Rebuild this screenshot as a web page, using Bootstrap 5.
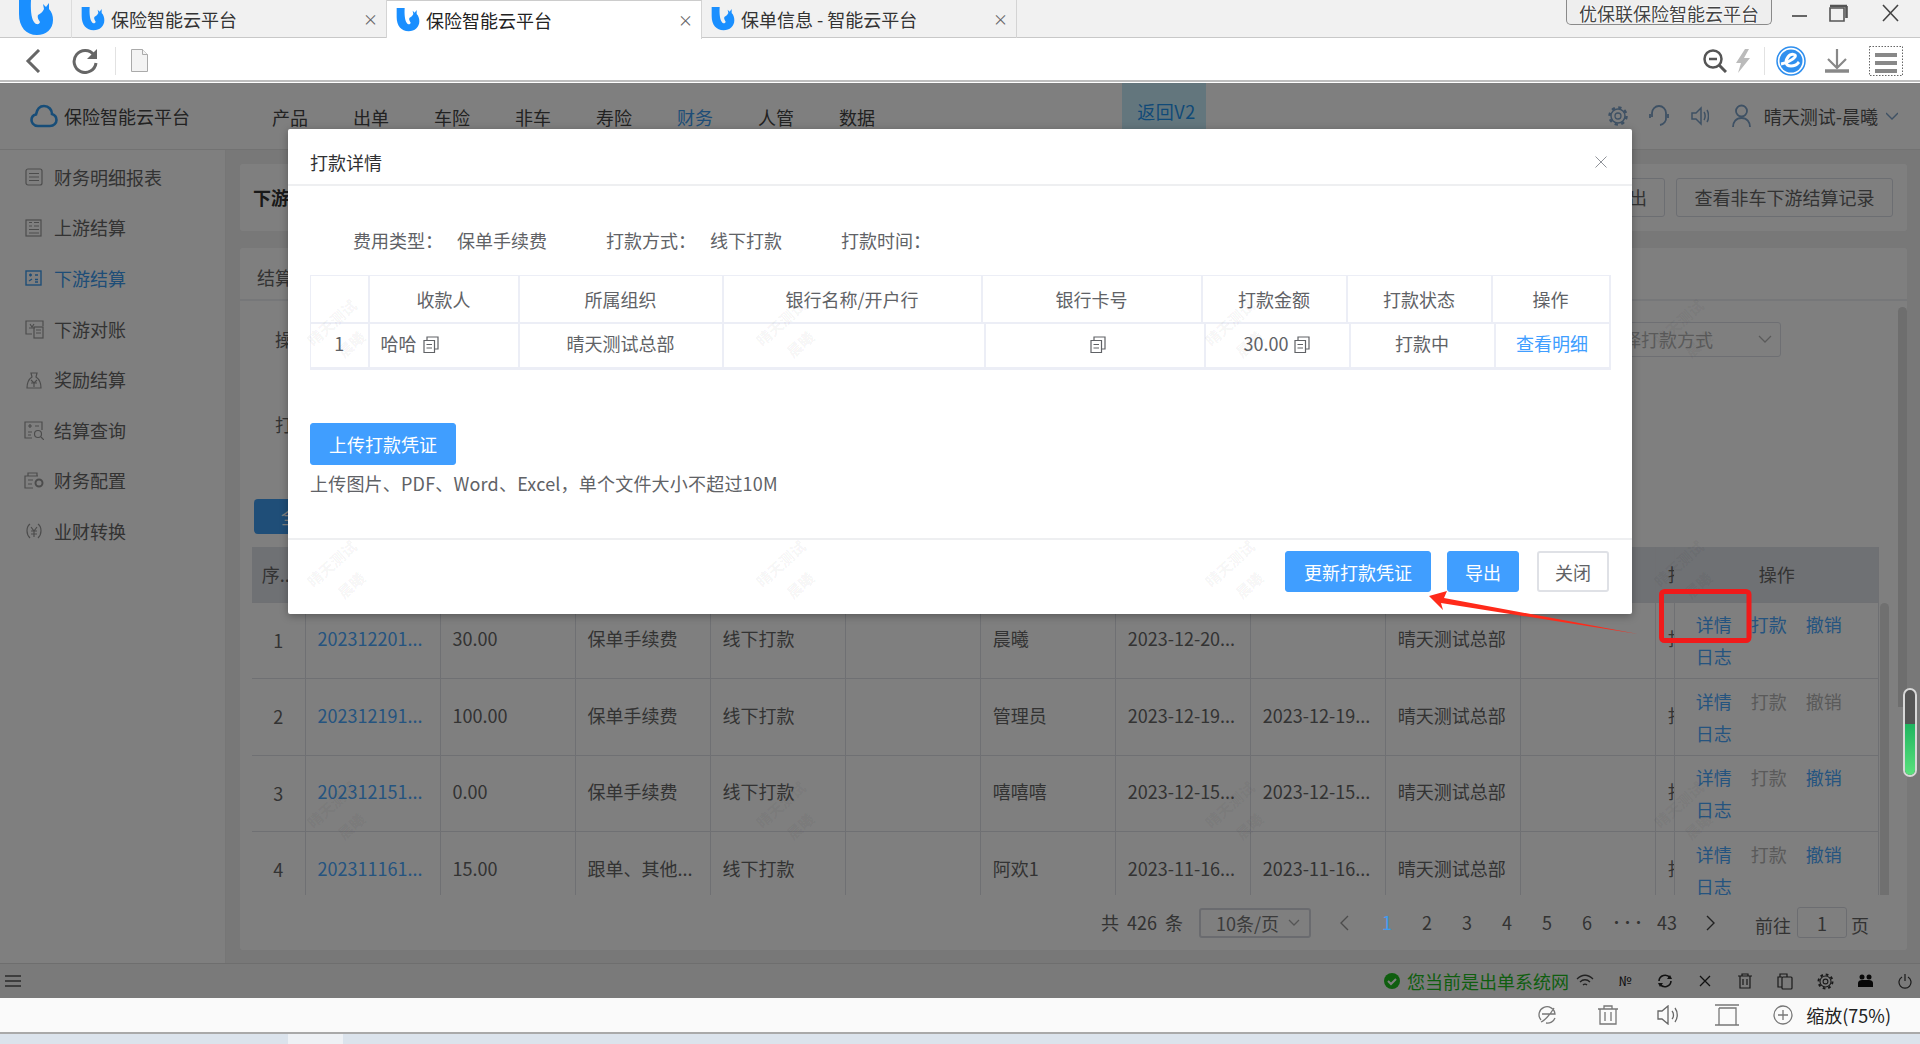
<!DOCTYPE html>
<html lang="zh-CN">
<head>
  <meta charset="UTF-8">
  <title>保险智能云平台</title>
  <link rel="stylesheet" href="https://cdn.jsdelivr.net/npm/bootstrap@5.3.0/dist/css/bootstrap.min.css">
  <style>
    html, body { margin: 0; height: 1044px; overflow: hidden; }
    body { position: relative; width: 1920px; font: 18px/1.5 "Noto Sans CJK SC", "Liberation Sans", sans-serif; color: #666; background: #dbe3ec; }
    svg { flex: none; display: block; }

    /* browser chrome */
    .tabstrip { height: 38px; background: #f1f1f1; border-bottom: 1px solid #c8c8c8; }
    .main-logo { width: 72px; height: 38px; padding-left: 19px; border-right: 1px solid #dcdcdc; }
    .wintab { width: 315px; height: 38px; padding-left: 9px; gap: 6px; color: #333; line-height: 38px; border-right: 1px solid #d4d4d4; }
    .wintab.on { background: #fff; height: 39px; border-top: 1px solid #ccc; color: #222; }
    .wintab .shut { margin-left: auto; margin-right: 8px; color: #666; font-size: 15px; }
    .brand-tag { width: 206px; height: 25px; margin-left: auto; margin-right: 20px; border: 1px solid #8a8a8a; border-top: 0; border-radius: 0 0 5px 5px; background: #eee; color: #444; font-size: 18px; line-height: 27px; text-align: center; text-shadow: 0 0 2px #fff, 0 0 2px #fff, 0 0 2px #fff; }
    .win-btns { width: 128px; padding-right: 21px; justify-content: flex-end; }
    .win-min { margin-right: 21px; }
    .win-max { margin-right: 34px; }
    .toolbar { height: 45px; background: linear-gradient(#fff 42px, #bdbdbd 42px, #bdbdbd 44px, #fff 44px); }
    .bar-sep { height: 28px; border-left: 1px solid #e2e2e2; }
    .bar-back { margin-left: 24px; }
    .bar-reload { margin-left: 28px; }
    .bar-sep.left-sep { margin: 0 15px 0 17px; }
    .bar-sep.right-sep { margin: 0 11px 0 13px; }
    .bar-down { margin-left: 18px; }
    .bar-menu { margin: 0 17px 0 19px; }

    /* app under the dialog mask */
    .app-shell { position: relative; height: 915px; background: #f0f0f0; }
    .app-upper { height: 880px; }
    .app-head { height: 67px; background: #fff; border-bottom: 1px solid #e4e4e4; color: #444; }
    .app-brand { width: 272px; padding-left: 30px; gap: 6px; }
    .menu-item { margin-right: 45px; line-height: 68px; }
    .menu-item.on, .side-item.on { color: #3c9bee; }
    .back-v2 { width: 84px; margin-left: 202px; padding-left: 5px; background: #c7edfa; color: #1f94f0; line-height: 57px; text-align: center; letter-spacing: .5px; }
    .head-right { margin-left: auto; padding-right: 22px; color: #555; }
    .hd-b { margin-left: 21px; } .hd-c { margin-left: 22px; } .hd-d { margin-left: 23px; }
    .hd-name { margin: 0 8px 0 13px; }
    .app-lower { height: 813px; }
    .app-side { width: 226px; background: #fff; border-right: 1px solid #ececec; padding-top: 2px; }
    .side-item { height: 50.6px; padding-left: 24px; gap: 10px; color: #666; }
    .side-ico { width: 20px; }
    .app-main { width: 0; padding: 14px 13px 13px 14px; }
    .pane { background: #fff; border: 0; border-radius: 3px; }
    .title-pane { height: 67px; padding: 0 14px 0 13px; margin-bottom: 17px; }
    .title-txt { color: #333; font-weight: 700; }
    .plain-btn { height: 39px; line-height: 37px; padding: 0 17px; border: 1px solid #d8dce4; border-radius: 3px; color: #666; background: #fff; }
    .plain-btn.wide { width: 217px; padding: 0; text-align: center; }
    .plain-btn.first { margin-right: 3px; }
    .tab-line { height: 53px; padding-left: 17px; line-height: 58px; border-bottom: 2px solid #eceef2; }
    .filter-line { height: 35px; padding-left: 35px; line-height: 35px; }
    .filter-line.one { margin-top: 21px; }
    .filter-line.two { margin-top: 50px; }
    .fake-select { height: 35px; width: 210px; padding: 0 8px 0 15px; margin-left: auto; margin-right: 126px; border: 1px solid #dcdfe6; border-radius: 3px; color: #b5b5b5; }
    .all-btn { width: 90px; height: 35px; margin: 57px 0 13px 14px; background: #3f9cf0; color: #fff; border: 0; border-radius: 4px; padding: 0; font-size: 18px; }

    .data-wrap { margin-left: 12px; width: 1637px; height: 348px; overflow: hidden; position: relative; }
    .table.data-table { width: 1627px; table-layout: fixed; margin: 0; border-color: #dfe1e6; --bs-table-bg: #fff; --bs-table-color: #666; }
    .table.data-table td, .table.data-table th { padding: 0 0 3px 12px; border-width: 0 1px 1px 0; font-weight: 400; vertical-align: middle; white-space: nowrap; overflow: hidden; }
    .table.data-table th { height: 55px; padding-bottom: 0; background: #dfe2e8; }
    .table.data-table tbody tr { height: 76.5px; }
    .table.data-table .num-cell { padding: 0; text-align: center; }
    .col-idx { width: 53px; } .col-std { width: 135px; } .col-cut { width: 19px; } .col-act { width: 204px; }
    .bill-link, .act-on { color: #4aa8ff; }
    .act-off { color: #b4b4b4; }
    .table.data-table .act-cell { line-height: 32px; padding: 0 0 0 21px; }
    .act-cell span { margin-right: 19px; }
    .act-cell .head-act { margin-left: 63px; }
    .thin-bar { position: absolute; top: 56px; right: 0; width: 9px; height: 292px; background: #e0e0e0; border-radius: 5px 5px 0 0; }
    .outer-bar { position: absolute; right: 0; top: 59px; width: 9px; height: 400px; background: #dcdcdc; border-radius: 5px 5px 0 0; }

    .pager-line { height: 55px; padding-right: 38px; justify-content: flex-end; color: #666; }
    .total-txt { word-spacing: 4px; }
    .page-select { width: 112px; height: 30px; margin: 0 10px 0 16px; padding: 0 9px 0 15px; border: 2px solid #d4d7de; border-radius: 3px; color: #777; line-height: 26px; }
    .pagination { margin: 0 22px 0 0; }
    .pagination .page-item .page-link { width: 40px; margin: 0; padding: 0; background: transparent; border: 0; color: #666; text-align: center; font-size: 18px; line-height: 27px; white-space: nowrap; }
    .pagination .page-item .page-link.arrow { width: 46px; height: 27px; display: flex; align-items: center; justify-content: center; }
    .pagination .page-item.active .page-link { color: #3f9cf0; background: transparent; }
    .pagination .page-item .page-link.dots { font-size: 12px; font-weight: 700; letter-spacing: -1px; }
    .goto-box { width: 50px; height: 31px; margin: 0 4px 0 6px; border: 1px solid #d8dbe2; border-radius: 3px; text-align: center; line-height: 31px; }
    .goto-text { position: relative; top: 3px; }

    /* status strips */
    .status-strip { height: 35px; border-top: 1px solid #dcdcdc; background: #f4f4f4; color: #222; }
    .ok-text { color: #1ebd1e; margin: 0 7px; }
    .wifi-ico { margin-right: 11px; }
    .slot { width: 40px; justify-content: center; }
    .slot.small-txt { font-size: 13px; }
    .slot.tail { width: 30px; margin-left: 5px; }
    .app-bottom { height: 36px; background: #fafafa; border-bottom: 2px solid #a9a9a9; color: #222; padding-right: 29px; justify-content: flex-end; }
    .ab-b { margin-left: 40px; } .ab-c { margin-left: 39px; } .ab-d { margin-left: 36px; } .ab-e { margin-left: 34px; }
    .zoom-txt { margin-left: 13px; }
    .desktop-strip { height: 10px; padding-left: 288px; }
    .desktop-strip i { display: block; width: 55px; height: 10px; background: #eef1f5; }

    /* dialog */
    .dlg-mask { position: absolute; inset: 0; background: rgba(0, 0, 0, .5); padding-top: 46px; }
    .dlg-box.modal-content { width: 1344px; height: 485px; background: #fff; border: 0; border-radius: 2px; box-shadow: 0 2px 8px rgba(0,0,0,.3); color: #606266; }
    .dlg-box .modal-header { height: 57px; padding: 11px 22px 0; border-bottom: 2px solid #eeeff1; color: #303133; }
    .dlg-box .modal-title { font-size: 18px; line-height: 1.5; }
    .dlg-box .modal-body { padding: 0 23px 0 22px; }
    .dlg-x { margin-right: 3px; }
    .info-line { height: 34px; margin: 37px 0 18px 43px; line-height: 34px; }
    .info-line b { font-weight: 400; margin-right: 14px; width: 90px; }
    .info-line span { margin-right: 59px; }
    .table.pay-table { table-layout: fixed; width: 1299px; margin: 0; border-color: #eceef6; --bs-table-bg: transparent; --bs-table-color: #606266; }
    .table.pay-table th, .table.pay-table td { border-width: 1px 2px 1px 1px; padding: 0; font-weight: 400; text-align: center; vertical-align: middle; }
    .table.pay-table th { height: 47px; }
    .table.pay-table td { height: 45px; padding-bottom: 4px; border-bottom-width: 3px; }
    .table.pay-table .left-cell { text-align: left; padding-left: 11px; }
    .copy-ico { display: inline-block; vertical-align: -2px; margin-left: 6px; }
    .w58 { width: 58px; } .w150 { width: 150px; } .w204 { width: 204px; } .w259 { width: 259px; } .w262 { width: 262px; } .w220 { width: 220px; } .w145 { width: 145px; } .w118 { width: 118px; } .w115 { width: 115px; }
    .see-link { color: #409eff; }
    .blue-btn { height: 41px; padding: 0; background: #409eff; border: 1px solid #409eff; border-radius: 3px; color: #fff; font-size: 18px; line-height: 1; }
    .blue-btn:hover { background: #409eff; color: #fff; }
    .up-btn { width: 146px; height: 42px; margin-top: 53px; display: block; }
    .up-tip { margin-top: 5px; letter-spacing: .2px; }
    .dlg-box .modal-footer { height: 76px; padding: 11px 23px 0 0; border-top: 2px solid #eeeff1; align-items: flex-start; justify-content: flex-end; flex-wrap: nowrap; }
    .dlg-box .modal-footer > * { margin: 0; }
    .w146 { width: 146px; } .w72 { width: 72px; }
    .dlg-box .modal-footer > .gap-a { margin-left: 16px; }
    .dlg-box .modal-footer > .gap-b { margin-left: 18px; }
    .line-btn { height: 41px; width: 72px; padding: 0; background: #fff; border: 2px solid #dfe1e6; border-radius: 3px; color: #606266; font-size: 18px; line-height: 1; }

    /* watermark + annotation, both sit over everything */
    .mark-layer { position: absolute; left: 117px; top: 213px; display: grid; grid-template-columns: repeat(4, 449px); grid-auto-rows: 241px; pointer-events: none; }
    .mark-cell { display: flex; align-items: center; justify-content: center; text-align: center; color: rgba(0,0,0,.05); font: 700 15px/1.9 "Noto Sans CJK SC", sans-serif; transform: rotate(-42deg); }
    .note-layer { position: absolute; left: 0; top: 0; pointer-events: none; }
    .level-gauge { position: absolute; left: 1903px; top: 688px; width: 14px; height: 89px; border: 2px solid #d8d8d8; border-radius: 7px; background: #555; overflow: hidden; }
    .level-gauge i { display: block; margin-top: 34px; height: 55px; background: linear-gradient(#1fb45f, #5fe57f); }
  </style>
</head>
<body>
  <svg width="0" height="0" class="position-absolute">
    <symbol id="fish" viewBox="0 0 34 36"><path fill="#1a8fff" d="M0 0H12C11.500 8 12 18 15 22C17 25 20 25 21 22C20 20 18 18 19 15C21 14 24 12 25 9L24 4L27 7L30 3L30 9C33 12 34 16 34 20C34 29 27 35 18 35C7 35 0 27 0 14Z"/></symbol>
    <symbol id="copy" viewBox="0 0 16 17"><path fill="none" stroke="currentColor" stroke-width="1.200" d="M1 4.500h10.500v12H1zM4 4.500V1h11v12h-3.500M3.500 8.500h5.500M3.500 12h5.500"/></symbol>
  </svg>

  <!-- window tabs -->
  <div class="tabstrip d-flex align-items-start">
    <div class="main-logo"><svg width="34" height="36"><use href="#fish"/></svg></div>
    <div class="wintab d-flex align-items-center"><svg width="24" height="24"><use href="#fish"/></svg>保险智能云平台<span class="shut">×</span></div>
    <div class="wintab on d-flex align-items-center"><svg width="24" height="24"><use href="#fish"/></svg>保险智能云平台<span class="shut">×</span></div>
    <div class="wintab d-flex align-items-center"><svg width="24" height="24"><use href="#fish"/></svg>保单信息 - 智能云平台<span class="shut">×</span></div>
    <div class="brand-tag">优保联保险智能云平台</div>
    <div class="win-btns d-flex align-items-center pt-1">
      <svg class="win-min" width="16" height="18" viewBox="0 0 16 18"><path stroke="#666" stroke-width="2" d="M0 12h15"/></svg>
      <svg class="win-max" width="19" height="18" viewBox="0 0 19 18" fill="none" stroke="#555" stroke-width="1.600"><path d="M1 4h14v13H1z"/><path stroke-width="2.600" d="M1 2h17M17.500 2v12"/></svg>
      <svg width="17" height="18" viewBox="0 0 17 18" fill="none" stroke="#444" stroke-width="1.600"><path d="M1 1l15 16M16 1L1 17"/></svg>
    </div>
  </div>

  <!-- address bar -->
  <div class="toolbar d-flex align-items-center">
    <svg class="bar-back" width="20" height="24" viewBox="0 0 20 24" fill="none" stroke="#666" stroke-width="3"><path d="M15 1L4 12l11 11"/></svg>
    <svg class="bar-reload" width="26" height="26" viewBox="0 0 26 26" fill="none" stroke="#666" stroke-width="3"><path d="M22 7A11 11 0 1 0 24 15"/><path fill="#666" stroke="none" d="M25 1v10H15z"/></svg>
    <div class="bar-sep left-sep"></div>
    <svg width="17" height="23" viewBox="0 0 17 23" fill="#f3f3f3" stroke="#aaa"><path d="M.5.500h11l5 5v17H.500z"/><path d="M11.500.500v5h5"/></svg>
    <div class="ms-auto d-flex align-items-center">
      <svg width="24" height="24" viewBox="0 0 24 24" fill="none" stroke="#555" stroke-width="2.500"><circle cx="10" cy="10" r="8.500"/><path d="M6 10h8"/><path stroke-width="3" d="M16 16l7 7"/></svg>
      <svg class="ms-2" width="16" height="24" viewBox="0 0 16 24"><path fill="#bbb" d="M10 0L1 14h5L3 24l12-15H9l5-9z"/></svg>
      <div class="bar-sep right-sep"></div>
      <svg width="30" height="30" viewBox="0 0 30 30"><circle cx="15" cy="15" r="14" fill="#fff" stroke="#2f8fee" stroke-width="1.500"/><circle cx="15" cy="15" r="11.500" fill="#2f8fee"/><path fill="none" stroke="#fff" stroke-width="3" d="M5 18c5-1 12-4 14-7s-4-4-7 0-3 9 3 9 7-3 8-4"/></svg>
      <svg class="bar-down" width="26" height="24" viewBox="0 0 26 24" fill="none" stroke="#888" stroke-width="2.200"><path d="M13 0v18M4 10l9 9 9-9"/><path stroke-width="3.500" d="M1 22h24"/></svg>
      <svg class="bar-menu" width="34" height="30" viewBox="0 0 34 30"><rect x=".5" y=".5" width="33" height="29" fill="none" stroke="#666" stroke-dasharray="1.500 1.500"/><path stroke="#888" stroke-width="4" d="M6 9h22M6 17h22M6 25h22"/></svg>
    </div>
  </div>

  <div class="app-shell d-flex flex-column">
    <div class="app-upper">
      <div class="app-head d-flex">
        <div class="app-brand d-flex align-items-center">
          <svg width="28" height="24" viewBox="0 0 28 24" fill="none" stroke="#2f9af0" stroke-width="2.600"><path d="M8 22C3 22 1.500 18 1.500 16c0-3 2-5 4.500-5.500C7 5 10 2 14 2c5 0 8 4 8 8 3 1 4.500 3.500 4.500 6 0 3-2.500 6-6.500 6z"/></svg>
          <span>保险智能云平台</span>
        </div>
        <div class="menu-item">产品</div><div class="menu-item">出单</div><div class="menu-item">车险</div><div class="menu-item">非车</div>
        <div class="menu-item">寿险</div><div class="menu-item on">财务</div><div class="menu-item">人管</div><div class="menu-item">数据</div>
        <div class="back-v2">返回V2</div>
        <div class="head-right d-flex align-items-center">
          <svg width="20" height="22" viewBox="0 0 20 22" fill="none" stroke="#7da2c8"><circle cx="10" cy="11" r="7" stroke-width="1.500"/><circle cx="10" cy="11" r="8.500" stroke-width="2.500" stroke-dasharray="3.300 3.370"/><circle cx="10" cy="11" r="3" stroke-width="1.300"/></svg>
          <svg class="hd-b" width="20" height="24" viewBox="0 0 20 24" fill="none" stroke="#7da2c8" stroke-width="1.800"><path d="M3 13V9a7 7 0 0 1 14 0v4a7 7 0 0 1-6 8"/><path d="M1 10v4M19 10v4"/></svg>
          <svg class="hd-c" width="18" height="22" viewBox="0 0 18 22" fill="none" stroke="#7da2c8" stroke-width="1.500"><path d="M1 8h4l5-5v16l-5-5H1zM13 7c1.500 2 1.500 6 0 8M16 5c2 3 2 9 0 12"/></svg>
          <svg class="hd-d" width="19" height="24" viewBox="0 0 19 24" fill="none" stroke="#7da2c8" stroke-width="1.800"><circle cx="9.500" cy="7" r="5.500"/><path d="M1 23c0-5 3-9 8.500-9s8.500 4 8.500 9"/></svg>
          <span class="hd-name">晴天测试-晨曦</span>
          <svg width="12" height="8" viewBox="0 0 12 8" fill="none" stroke="#7da2c8" stroke-width="1.400"><path d="M0 1l6 6 6-6"/></svg>
        </div>
      </div>

      <div class="app-lower d-flex">
        <div class="app-side">
          <div class="side-item d-flex align-items-center"><svg class="side-ico" height="18" viewBox="0 0 20 18" fill="none" stroke="#999" stroke-width="1.200"><rect x="2" y="1" width="16" height="16" rx="2"/><path d="M5 5.500h10M5 9h10M5 12.500h10"/></svg>财务明细报表</div>
          <div class="side-item d-flex align-items-center"><svg class="side-ico" height="18" viewBox="0 0 20 18" fill="none" stroke="#999" stroke-width="1.200"><rect x="2" y="1" width="15" height="16"/><path d="M5 3.500l3 0M5 7l3 0M10 3.500h5M10 7h5M5 10.500h10M5 14h10"/></svg>上游结算</div>
          <div class="side-item on d-flex align-items-center"><svg class="side-ico" height="16" viewBox="0 0 20 16" fill="none" stroke="#3c9bee" stroke-width="1.400"><rect x="2" y="1" width="15" height="14"/><path d="M5 5h3M6.500 3.500v3M11 5h3M5 11l3-2M11 9.500h3M11 12h3"/></svg>下游结算</div>
          <div class="side-item d-flex align-items-center"><svg class="side-ico" height="19" viewBox="0 0 20 19" fill="none" stroke="#999" stroke-width="1.200"><path d="M8 14H2V1h17v5"/><rect x="10" y="7" width="9" height="11"/><path d="M12 10h5M12 13h5M6 4l2 3 2-3M5 8h6"/></svg>下游对账</div>
          <div class="side-item d-flex align-items-center"><svg class="side-ico" height="18" viewBox="0 0 20 18" fill="none" stroke="#999" stroke-width="1.200"><path d="M7 2h6l-1 4c3 2 5 6 5 11H3c0-5 2-9 5-11zM7 9l3 3 3-3M7 12h6M10 12v4"/></svg>奖励结算</div>
          <div class="side-item d-flex align-items-center"><svg class="side-ico" height="19" viewBox="0 0 20 19" fill="none" stroke="#999" stroke-width="1.200"><path d="M8 17H1V1h17v8"/><path d="M4 5h4M6 3v4M11 5h4M4 11h4M4 14h3"/><circle cx="14" cy="13" r="3.500"/><path d="M17 16l3 3"/></svg>结算查询</div>
          <div class="side-item d-flex align-items-center"><svg class="side-ico" height="18" viewBox="0 0 20 18" fill="none" stroke="#999" stroke-width="1.200"><path d="M9 16H1V4h13M4 4V1h9v3M4 8h5M4 12h4"/><circle cx="15" cy="11" r="3.500" stroke-width="2"/></svg>财务配置</div>
          <div class="side-item d-flex align-items-center"><svg class="side-ico" height="18" viewBox="0 0 20 18" fill="none" stroke="#999" stroke-width="1.200"><path d="M6 2C2 5 2 12 6 16M14 2c4 3 4 10 0 14M7 5l3 4 3-4M7 9h6M7 12h6M10 9v6"/></svg>业财转换</div>
        </div>

        <div class="app-main flex-grow-1 d-flex flex-column position-relative">
          <div class="title-pane pane d-flex align-items-center justify-content-between">
            <span class="title-txt">下游结算</span>
            <div class="d-flex gap-2">
              <div class="plain-btn first">导出</div>
              <div class="plain-btn wide">查看非车下游结算记录</div>
            </div>
          </div>

          <div class="card pane flex-grow-1 position-relative">
            <div class="tab-line">结算</div>
            <div class="filter-line one d-flex align-items-center">操作
              <div class="fake-select d-flex align-items-center justify-content-between">请选择打款方式
                <svg width="14" height="9" viewBox="0 0 14 9" fill="none" stroke="#b5b5b5" stroke-width="1.300"><path d="M1 1l6 6 6-6"/></svg>
              </div>
            </div>
            <div class="filter-line two">打款</div>
            <button class="all-btn btn">全部</button>

            <div class="data-wrap">
              <table class="table data-table">
                <thead><tr>
                  <th class="col-idx num-cell">序...</th><th class="col-std"></th><th class="col-std"></th><th class="col-std"></th><th class="col-std"></th><th class="col-std"></th><th class="col-std"></th><th class="col-std"></th><th class="col-std"></th><th class="col-std"></th><th class="col-std"></th><th class="col-cut">打款状态</th><th class="col-act act-cell"><span class="head-act">操作</span></th>
                </tr></thead>
                <tbody>
                  <tr><td class="num-cell">1</td><td><span class="bill-link">202312201...</span></td><td>30.00</td><td>保单手续费</td><td>线下打款</td><td></td><td>晨曦</td><td>2023-12-20...</td><td></td><td>晴天测试总部</td><td></td><td>打款中</td><td class="act-cell"><span class="act-on">详情</span><span class="act-on">打款</span><span class="act-on">撤销</span><br><span class="act-on">日志</span></td></tr>
                  <tr><td class="num-cell">2</td><td><span class="bill-link">202312191...</span></td><td>100.00</td><td>保单手续费</td><td>线下打款</td><td></td><td>管理员</td><td>2023-12-19...</td><td>2023-12-19...</td><td>晴天测试总部</td><td></td><td>打款中</td><td class="act-cell"><span class="act-on">详情</span><span class="act-off">打款</span><span class="act-off">撤销</span><br><span class="act-on">日志</span></td></tr>
                  <tr><td class="num-cell">3</td><td><span class="bill-link">202312151...</span></td><td>0.00</td><td>保单手续费</td><td>线下打款</td><td></td><td>嘻嘻嘻</td><td>2023-12-15...</td><td>2023-12-15...</td><td>晴天测试总部</td><td></td><td>打款中</td><td class="act-cell"><span class="act-on">详情</span><span class="act-off">打款</span><span class="act-on">撤销</span><br><span class="act-on">日志</span></td></tr>
                  <tr><td class="num-cell">4</td><td><span class="bill-link">202311161...</span></td><td>15.00</td><td>跟单、其他...</td><td>线下打款</td><td></td><td>阿欢1</td><td>2023-11-16...</td><td>2023-11-16...</td><td>晴天测试总部</td><td></td><td>打款中</td><td class="act-cell"><span class="act-on">详情</span><span class="act-off">打款</span><span class="act-on">撤销</span><br><span class="act-on">日志</span></td></tr>
                </tbody>
              </table>
              <div class="thin-bar"></div>
            </div>

            <div class="pager-line d-flex align-items-center">
              <span class="total-txt">共 426 条</span>
              <div class="page-select d-flex align-items-center justify-content-between">10条/页
                <svg width="12" height="8" viewBox="0 0 12 8" fill="none" stroke="#aaa" stroke-width="1.300"><path d="M1 1l5 5 5-5"/></svg>
              </div>
              <ul class="pagination align-items-center">
                <li class="page-item"><span class="page-link arrow"><svg width="9" height="16" viewBox="0 0 9 16" fill="none" stroke="#999" stroke-width="1.400"><path d="M8 1L1 8l7 7"/></svg></span></li>
                <li class="page-item active"><span class="page-link">1</span></li>
                <li class="page-item"><span class="page-link">2</span></li>
                <li class="page-item"><span class="page-link">3</span></li>
                <li class="page-item"><span class="page-link">4</span></li>
                <li class="page-item"><span class="page-link">5</span></li>
                <li class="page-item"><span class="page-link">6</span></li>
                <li class="page-item"><span class="page-link dots">•••</span></li>
                <li class="page-item"><span class="page-link">43</span></li>
                <li class="page-item"><span class="page-link arrow"><svg width="9" height="16" viewBox="0 0 9 16" fill="none" stroke="#444" stroke-width="1.400"><path d="M1 1l7 7-7 7"/></svg></span></li>
              </ul>
              <span class="goto-text">前往</span><span class="goto-box">1</span><span class="goto-text">页</span>
            </div>
            <div class="outer-bar"></div>
          </div>
        </div>
      </div>
    </div>

    <div class="status-strip d-flex align-items-center">
      <svg class="ms-1" width="18" height="14" viewBox="0 0 18 14" stroke="#555" stroke-width="1.600"><path d="M1 2h16M1 7h16M1 12h16"/></svg>
      <div class="ms-auto d-flex align-items-center">
        <svg width="16" height="16" viewBox="0 0 16 16"><circle cx="8" cy="8" r="8" fill="#1ebd1e"/><path fill="none" stroke="#fff" stroke-width="2" d="M4 8l3 3 5-5"/></svg>
        <span class="ok-text">您当前是出单系统网</span>
        <svg class="wifi-ico" width="18" height="14" viewBox="0 0 18 14" fill="none" stroke="#444" stroke-width="1.300"><path d="M1 5c5-5 11-5 16 0M4 8c3-3 7-3 10 0M7 11c1-1 3-1 4 0"/></svg>
        <div class="slot small-txt d-flex">№</div>
        <div class="slot d-flex"><svg width="16" height="14" viewBox="0 0 16 14" fill="none" stroke="#222" stroke-width="1.600"><path d="M2 7a6 6 0 0 1 11-3M14 7a6 6 0 0 1-11 3"/><path fill="#222" stroke="none" d="M10 5h5L13 1zM6 9H1l2 4z"/></svg></div>
        <div class="slot d-flex"><svg width="12" height="12" viewBox="0 0 12 12" stroke="#222" stroke-width="1.300"><path d="M1 1l10 10M11 1L1 11"/></svg></div>
        <div class="slot d-flex"><svg width="14" height="16" viewBox="0 0 14 16" fill="none" stroke="#333" stroke-width="1.200"><path d="M0 3h14M4 3V1h6v2M2 3v12h10V3M5 6v6M9 6v6"/></svg></div>
        <div class="slot d-flex"><svg width="16" height="17" viewBox="0 0 16 17" fill="none" stroke="#333" stroke-width="1.200"><path d="M5 4H1v10h4"/><rect x="5" y="4" width="10" height="12" rx="1"/><path d="M3 4V1h7v3"/></svg></div>
        <div class="slot d-flex"><svg width="17" height="17" viewBox="0 0 17 17" fill="none" stroke="#333"><circle cx="8.500" cy="8.500" r="5.500" stroke-width="1.100"/><circle cx="8.500" cy="8.500" r="7" stroke-width="2" stroke-dasharray="2.700 2.800"/><circle cx="8.500" cy="8.500" r="2.400" stroke-width="1.100"/></svg></div>
        <div class="slot d-flex"><svg width="17" height="14" viewBox="0 0 17 14" fill="#111"><circle cx="5" cy="3" r="2.500"/><circle cx="12" cy="3" r="2.500"/><path d="M1 13V9c0-2 2-3 4-3h7c2 0 4 1 4 3v4z"/></svg></div>
        <div class="slot tail d-flex"><svg width="14" height="15" viewBox="0 0 14 15" fill="none" stroke="#333" stroke-width="1.200"><path d="M4 3a6 6 0 1 0 6 0M7 0v7"/></svg></div>
      </div>
    </div>

    <!-- dialog mask -->
    <div class="dlg-mask d-flex justify-content-center align-items-start">
      <div class="dlg-box modal-content">
        <div class="modal-header">
          <div class="modal-title">打款详情</div>
          <svg class="ms-auto dlg-x" width="12" height="12" viewBox="0 0 12 12" stroke="#909399" stroke-width="1"><path d="M.5.500l11 11M11.500.500l-11 11"/></svg>
        </div>
        <div class="modal-body">
          <div class="info-line d-flex"><b>费用类型：</b><span>保单手续费</span><b>打款方式：</b><span>线下打款</span><b>打款时间：</b></div>
          <table class="table pay-table"><thead><tr>
            <th class="w58"></th><th class="w150">收款人</th><th class="w204">所属组织</th><th class="w259">银行名称/开户行</th><th class="w220">银行卡号</th><th class="w145">打款金额</th><th class="w145">打款状态</th><th class="w118">操作</th>
          </tr></thead></table>
          <table class="table pay-table"><tbody><tr>
            <td class="w58">1</td>
            <td class="w150 left-cell">哈哈<svg class="copy-ico" width="16" height="17"><use href="#copy"/></svg></td>
            <td class="w204">晴天测试总部</td>
            <td class="w262"></td>
            <td class="w220"><svg class="copy-ico" width="16" height="17"><use href="#copy"/></svg></td>
            <td class="w145">30.00<svg class="copy-ico" width="16" height="17"><use href="#copy"/></svg></td>
            <td class="w145">打款中</td>
            <td class="w115"><span class="see-link">查看明细</span></td>
          </tr></tbody></table>
          <button class="btn blue-btn up-btn">上传打款凭证</button>
          <div class="up-tip">上传图片、PDF、Word、Excel，单个文件大小不超过10M</div>
        </div>
        <div class="modal-footer">
          <button class="btn blue-btn w146">更新打款凭证</button>
          <button class="btn blue-btn w72 gap-a">导出</button>
          <button class="btn line-btn gap-b">关闭</button>
        </div>
      </div>
    </div>
  </div>

  <div class="app-bottom d-flex align-items-center">
    <svg width="20" height="20" viewBox="0 0 20 20" fill="none" stroke="#777" stroke-width="1.300"><path d="M3 15a8 8 0 1 1 14-6H4M3 17c3-1 9-7 13-14M17 13a8 8 0 0 1-9 5"/></svg>
    <svg class="ab-b" width="20" height="20" viewBox="0 0 20 20" fill="none" stroke="#777" stroke-width="1.300"><path d="M0 4h20M6 4V1h8v3M2 4v15h16V4M7 7v9M13 7v9"/></svg>
    <svg class="ab-c" width="22" height="20" viewBox="0 0 22 20" fill="none" stroke="#666" stroke-width="1.300"><path d="M1 6h4l6-5v18l-6-5H1zM15 6c2 2 2 6 0 8M18 3c3 4 3 10 0 14"/></svg>
    <svg class="ab-d" width="24" height="22" viewBox="0 0 24 22" fill="none" stroke="#777" stroke-width="1.300"><path d="M0 1h24M4 4h17v17M4 4v17M0 21h24"/></svg>
    <svg class="ab-e" width="20" height="20" viewBox="0 0 20 20" fill="none" stroke="#777" stroke-width="1.300"><circle cx="10" cy="10" r="9"/><path d="M5 10h10M10 5v10"/></svg>
    <span class="zoom-txt">缩放(75%)</span>
  </div>
  <div class="desktop-strip"><i></i></div>

  <div class="mark-layer">
    <div class="mark-cell">晴天测试<br>晨曦</div><div class="mark-cell">晴天测试<br>晨曦</div><div class="mark-cell">晴天测试<br>晨曦</div><div class="mark-cell">晴天测试<br>晨曦</div>
    <div class="mark-cell">晴天测试<br>晨曦</div><div class="mark-cell">晴天测试<br>晨曦</div><div class="mark-cell">晴天测试<br>晨曦</div><div class="mark-cell">晴天测试<br>晨曦</div>
    <div class="mark-cell">晴天测试<br>晨曦</div><div class="mark-cell">晴天测试<br>晨曦</div><div class="mark-cell">晴天测试<br>晨曦</div><div class="mark-cell">晴天测试<br>晨曦</div>
  </div>

  <div class="level-gauge"><i></i></div>

  <svg class="note-layer" width="1920" height="1044" viewBox="0 0 1920 1044">
    <rect x="1661.500" y="591.500" width="87.500" height="49" rx="3" fill="none" stroke="#f01a1a" stroke-width="5"/>
    <path fill="#ff2a1a" d="M1429 596L1447 591L1444 598L1638 634L1441 603L1443 610Z"/>
  </svg>
</body>
</html>
